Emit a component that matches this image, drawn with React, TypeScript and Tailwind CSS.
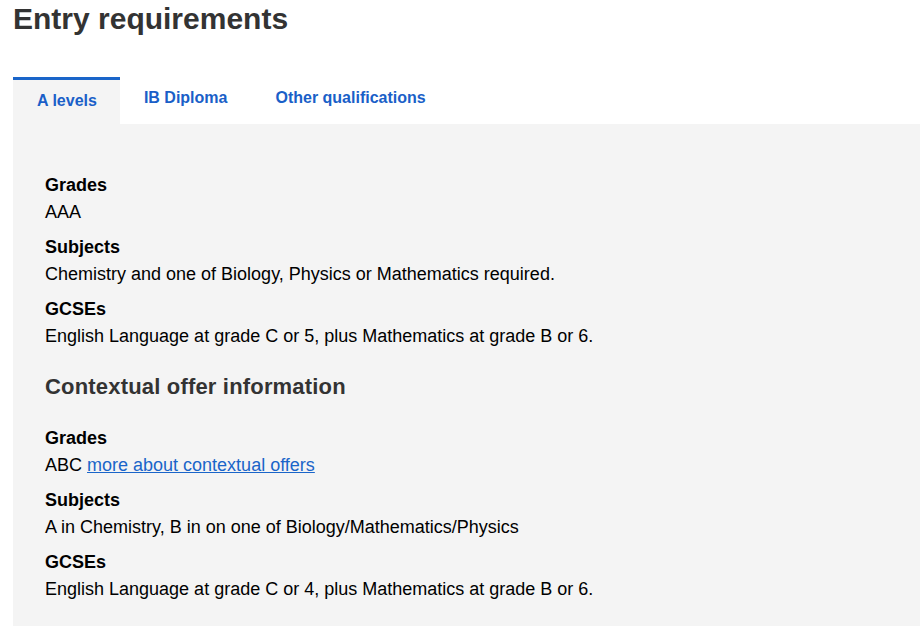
import { useState } from "react";

type TabId = "alevels" | "ib" | "other";

const tabs: { id: TabId; label: string }[] = [
  { id: "alevels", label: "A levels" },
  { id: "ib", label: "IB Diploma" },
  { id: "other", label: "Other qualifications" },
];

function Requirement({ label, children }: { label: string; children: React.ReactNode }) {
  return (
    <div className="mb-[9px]">
      <div className="text-[18px] font-bold leading-[27px] text-black">{label}</div>
      <div className="text-[18px] leading-[26px] text-black">{children}</div>
    </div>
  );
}

export default function App() {
  const [active, setActive] = useState<TabId>("alevels");

  return (
    <div className="min-h-[627px] bg-white pl-[13px] text-base" style={{ fontFamily: '"Liberation Sans", Arial, sans-serif' }}>
      {/* Page heading */}
      <h1 className="text-[30px] font-bold leading-[37px] text-[#333]">Entry requirements</h1>

      {/* Tabs */}
      <div className="mt-[40px] flex">
        {tabs.map((tab) => (
          <button
            key={tab.id}
            onClick={() => setActive(tab.id)}
            className={
              active === tab.id
                ? "flex h-[47px] items-start border-t-[3px] border-[#1a65c9] bg-[#f4f4f4] pl-6 pr-[23px] pt-[11px] text-base font-bold leading-[20px] text-[#1a5fc8]"
                : "flex h-[47px] items-start px-6 pt-[11px] text-base font-bold leading-[20px] text-[#1a5fc8]"
            }
          >
            {tab.label}
          </button>
        ))}
      </div>

      {/* Panel */}
      <div className="h-[502px] bg-[#f4f4f4] px-8 pt-[48px]">
        <Requirement label="Grades">AAA</Requirement>
        <Requirement label="Subjects">Chemistry and one of Biology, Physics or Mathematics required.</Requirement>
        <Requirement label="GCSEs">English Language at grade C or 5, plus Mathematics at grade B or 6.</Requirement>

        <h2 className="mt-[23px] mb-[23px] text-[22px] font-bold leading-[30px] tracking-[0.18px] text-[#333]">
          Contextual offer information
        </h2>

        <Requirement label="Grades">
          ABC{" "}
          <a href="#" className="text-[#1a65c9] underline">
            more about contextual offers
          </a>
        </Requirement>
        <Requirement label="Subjects">A in Chemistry, B in on one of Biology/Mathematics/Physics</Requirement>
        <Requirement label="GCSEs">English Language at grade C or 4, plus Mathematics at grade B or 6.</Requirement>
      </div>
    </div>
  );
}
